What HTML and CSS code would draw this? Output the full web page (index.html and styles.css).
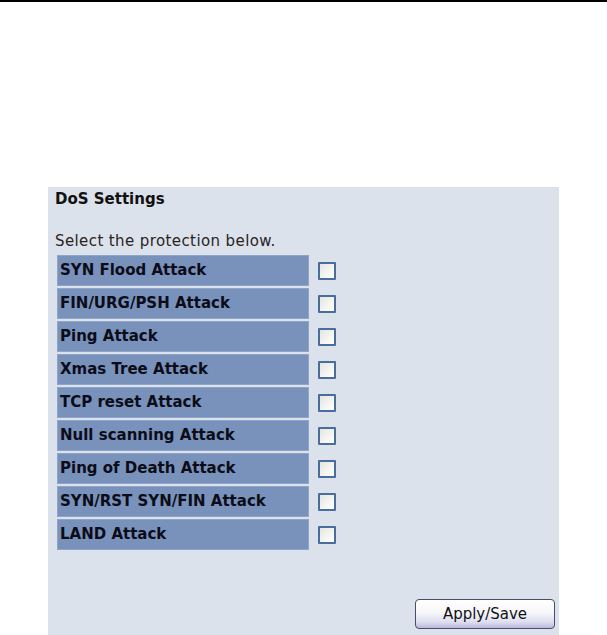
FILE: index.html
```html
<!DOCTYPE html>
<html>
<head>
<meta charset="utf-8">
<link rel="stylesheet" href="styles.css">
</head>
<body>
<div class="topline"></div>
<div class="panel">
  <div class="title">DoS Settings</div>
  <div class="hint">Select the protection below.</div>
  <div class="list">
    <div class="row"><div class="label">SYN Flood Attack</div><span class="box"></span></div>
    <div class="row"><div class="label">FIN/URG/PSH Attack</div><span class="box"></span></div>
    <div class="row"><div class="label">Ping Attack</div><span class="box"></span></div>
    <div class="row"><div class="label">Xmas Tree Attack</div><span class="box"></span></div>
    <div class="row"><div class="label">TCP reset Attack</div><span class="box"></span></div>
    <div class="row"><div class="label">Null scanning Attack</div><span class="box"></span></div>
    <div class="row"><div class="label">Ping of Death Attack</div><span class="box"></span></div>
    <div class="row"><div class="label">SYN/RST SYN/FIN Attack</div><span class="box"></span></div>
    <div class="row"><div class="label">LAND Attack</div><span class="box"></span></div>
  </div>
  <div class="actions"><button class="btn">Apply/Save</button></div>
</div>
</body>
</html>
```
FILE: styles.css
```css
html, body {
  margin: 0;
  padding: 0;
  background: #ffffff;
  font-family: "DejaVu Sans", Verdana, sans-serif;
  overflow: hidden;
}
.topline {
  height: 2px;
  background: #000000;
}
.panel {
  margin: 185px 0 0 48px;
  width: 511px;
  height: 448px;
  background: #dbe2ec;
  box-sizing: border-box;
}
.title {
  padding: 3px 0 0 7px;
  font-size: 15px;
  font-weight: bold;
  color: #111;
  line-height: 18px;
}
.hint {
  margin-top: 24px;
  padding-left: 7px;
  font-size: 15px;
  letter-spacing: 0.4px;
  color: #2a2222;
  line-height: 18px;
}
.list {
  display: flex;
  flex-direction: column;
  gap: 2px;
  padding-left: 9px;
  margin-top: 5px;
}
.row {
  display: flex;
  align-items: center;
  height: 31px;
}
.label {
  width: 252px;
  height: 31px;
  box-sizing: border-box;
  background: #7892bb;
  border: 1px solid #8ea4c8;
  padding-left: 2px;
  font-size: 15px;
  font-weight: bold;
  color: #0c0c18;
  line-height: 29px;
  white-space: nowrap;
}
.box {
  margin-left: 9px;
  width: 18px;
  height: 18px;
  box-sizing: border-box;
  border: 2px solid #4a6e9c;
  border-radius: 1px;
  background: linear-gradient(135deg, #e4e4e0 0%, #f5f5f3 60%, #ffffff 100%);
}
.actions {
  display: flex;
  justify-content: flex-end;
  padding-right: 4px;
  margin-top: 49px;
}
.btn {
  width: 140px;
  height: 30px;
  border: 1px solid #4c4c6a;
  border-radius: 4px;
  background: linear-gradient(to bottom, #ffffff 0%, #f7f7fb 45%, #dcdcef 80%, #b8b8dc 100%);
  font-family: "DejaVu Sans", Verdana, sans-serif;
  font-size: 15px;
  color: #111;
  padding: 0;
}
```
